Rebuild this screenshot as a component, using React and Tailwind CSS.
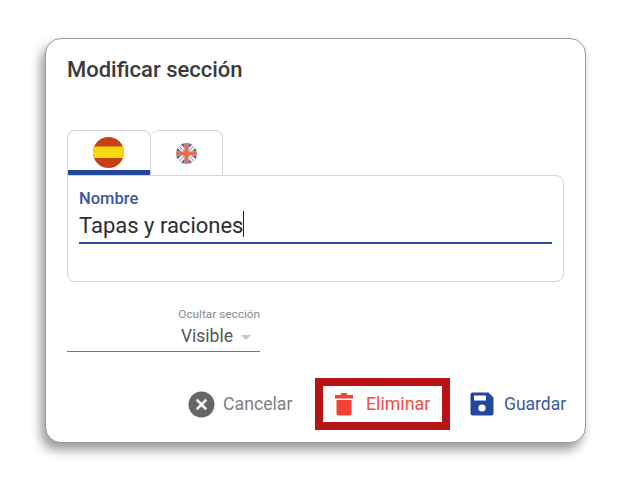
export default function App() {
  return (
    <div className="w-[630px] h-[480px] bg-white overflow-hidden pt-[38px] pl-[45px] font-['Roboto',sans-serif]">
      <div className="w-[541px] h-[405px] bg-white rounded-[16px] border border-[#9a9a9a] shadow-[-4px_7px_11px_rgba(0,0,0,0.4)] pl-[21px] pr-[21px] flex flex-col">
        <div className="mt-[18px] h-[26px] text-[22px] leading-[26px] font-medium text-[#3a3a3a]">Modificar sección</div>
        <div className="mt-[47px] flex h-[45px]">
          <div className="w-[84px] h-[45px] border border-b-0 border-[#d4d4d4] rounded-t-[8px] flex flex-col items-center">
            <svg className="mt-[6px] mr-[1px]" width="31" height="31" viewBox="0 0 31 31">
              <defs><clipPath id="es"><circle cx="15.5" cy="15.5" r="15.5" /></clipPath></defs>
              <g clipPath="url(#es)">
                <rect width="31" height="31" fill="#c63f17" />
                <rect y="9.5" width="31" height="11.5" fill="#f6d90f" />
              </g>
            </svg>
            <div className="mt-auto w-full h-[5px] bg-[#23479d]" />
          </div>
          <div className="w-[72px] h-[45px] border border-l-0 border-b-0 border-[#d4d4d4] rounded-t-[8px] flex justify-center">
            <svg className="mt-[12px]" width="21" height="21" viewBox="0 0 21 21">
              <defs><clipPath id="uk"><circle cx="10.5" cy="10.5" r="10.5" /></clipPath></defs>
              <g clipPath="url(#uk)">
                <rect width="21" height="21" fill="#ece8e7" />
                <path d="M3.5 0L8.5 0L8.5 5ZM17.5 0L12.5 0L12.5 5ZM3.5 21L8.5 21L8.5 16ZM17.5 21L12.5 21L12.5 16ZM0 3.5L5 8.5L0 8.5ZM21 3.5L16 8.5L21 8.5ZM0 17.5L5 12.5L0 12.5ZM21 17.5L16 12.5L21 12.5Z" fill="#3f6ea8" />
                <path d="M2 2L19 19M19 2L2 19" stroke="#e58f78" strokeWidth="1" />
                <path d="M10.5 0V21M0 10.5H21" stroke="#de6f50" strokeWidth="4" />
              </g>
            </svg>
          </div>
        </div>
        <div className="w-[497px] h-[107px] border border-[#d4d4d4] rounded-b-[8px] rounded-tr-[8px] px-[11px] pt-[13px]">
          <div className="text-[16.5px] leading-[19px] font-medium text-[#3a57a6]">Nombre</div>
          <div className="mt-[2px] h-[34px] border-b-2 border-[#2f4d9f] text-[22px] leading-[31px] text-[#2e2e2e] flex items-start">
            <span>Tapas y raciones</span>
            <span className="w-px h-[26px] mt-[1px] bg-[#222222]" />
          </div>
        </div>
        <div className="mt-[25px] w-[193px] h-[45px] border-b border-[#777777] flex flex-col items-end">
          <div className="text-[11.8px] leading-[14px] text-[#8a8a8a]">Ocultar sección</div>
          <div className="mt-[3px] flex items-center pr-[9px]">
            <span className="text-[17.5px] leading-[24px] text-[#555555]">Visible</span>
            <span className="ml-[8px] mt-[2px] w-0 h-0 border-x-[5px] border-x-transparent border-t-[5px] border-t-[#c4c4c4]" />
          </div>
        </div>
        <div className="mt-[26px] flex items-center">
          <div className="ml-[121px] shrink-0 flex items-center w-[127px]">
            <svg width="27" height="27" viewBox="0 0 27 27">
              <circle cx="13.5" cy="13.5" r="13" fill="#666666" />
              <path d="M8.7 8.7L18.3 18.3M18.3 8.7L8.7 18.3" stroke="#ffffff" strokeWidth="2.6" />
            </svg>
            <span className="ml-[8px] text-[17.7px] leading-[24px] text-[#808080]">Cancelar</span>
          </div>
          <div className="shrink-0 w-[135px] h-[52px] border-[8px] border-[#b71515] flex items-center pl-[11px]">
            <svg width="20" height="24" viewBox="0 0 20 24">
              <path d="M1 6.5H19V3H13.5L12.5 1H7.5L6.5 3H1Z" fill="#f44336" />
              <path d="M2.5 8H17.5V21.5A2 2 0 0 1 15.5 23.5H4.5A2 2 0 0 1 2.5 21.5Z" fill="#f44336" />
            </svg>
            <span className="ml-[12px] text-[17.8px] leading-[24px] text-[#f44b45]">Eliminar</span>
          </div>
          <div className="shrink-0 ml-[20px] flex items-center">
            <svg width="24" height="24" viewBox="0 0 24 24">
              <path d="M2.5 0.5H18.5L23.5 5.5V21.5A2 2 0 0 1 21.5 23.5H2.5A2 2 0 0 1 0.5 21.5V2.5A2 2 0 0 1 2.5 0.5Z" fill="#23479d" />
              <rect x="4" y="3.5" width="12" height="5" fill="#ffffff" />
              <circle cx="12" cy="16" r="3.6" fill="#ffffff" />
            </svg>
            <span className="ml-[10px] text-[17.5px] leading-[24px] text-[#3b59a8]">Guardar</span>
          </div>
        </div>
      </div>
    </div>
  );
}
